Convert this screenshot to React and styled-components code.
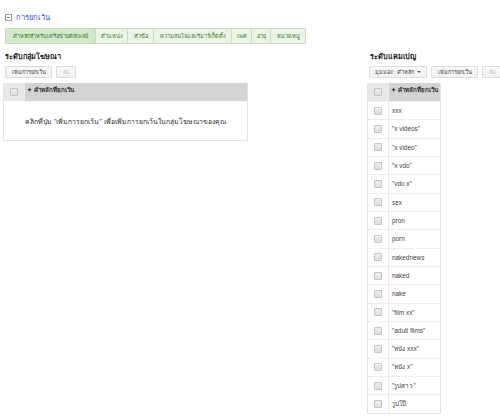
import React from "react";
import styled, { createGlobalStyle } from "styled-components";

const GlobalStyle = createGlobalStyle`
  html, body {
    margin: 0;
    padding: 0;
    background: #ffffff;
    overflow: hidden;
  }
  body {
    font-family: "Liberation Sans", "Noto Sans", Arial, sans-serif;
    color: #222;
  }
`;

const Page = styled.div`
  width: 500px;
  height: 417px;
  overflow: hidden;
  padding: 10px 0 0 5px;
  box-sizing: border-box;
`;

const TitleRow = styled.div`
  display: flex;
  align-items: center;
  gap: 4px;
  height: 14px;
`;

const CollapseIcon = styled.span`
  width: 5px;
  height: 5px;
  border: 1px solid #999;
  position: relative;
  display: inline-block;
  &::after {
    content: "";
    position: absolute;
    left: 1px;
    right: 1px;
    top: 2px;
    height: 1px;
    background: #777;
  }
`;

const TitleLink = styled.span`
  color: #1155cc;
  font-size: 7.5px;
`;

const Tabs = styled.div`
  display: flex;
  margin-top: 4px;
  height: 16px;
  width: 301px;
  border: 1px solid #c8dcc0;
  box-sizing: border-box;
  background: #e9f4e4;
`;

const Tab = styled.div`
  width: ${(p) => p.$w}px;
  display: flex;
  align-items: center;
  justify-content: center;
  font-size: 5.7px;
  color: #3f7a35;
  background: ${(p) => (p.$active ? "#d2e8c9" : "transparent")};
  border-right: 1px solid #c8dcc0;
  box-sizing: border-box;
  white-space: nowrap;
  &:last-child {
    border-right: none;
  }
`;

const Columns = styled.div`
  display: flex;
  margin-top: 8px;
  margin-left: -2px;
`;

const LeftPanel = styled.div`
  width: 245px;
  flex-shrink: 0;
`;

const RightPanel = styled.div`
  margin-left: 119px;
  flex-shrink: 0;
  width: 140px;
`;

const SectionTitle = styled.div`
  font-size: 7.3px;
  font-weight: bold;
  color: #222;
  height: 10px;
  line-height: 10px;
  padding-left: ${(p) => p.$indent || 2}px;
`;

const ButtonBar = styled.div`
  display: flex;
  gap: 4px;
  margin-top: 4px;
  padding-left: 2px;
`;

const Button = styled.div`
  height: 12px;
  width: ${(p) => p.$w}px;
  box-sizing: border-box;
  border: 1px solid #dcdcdc;
  border-radius: 1px;
  background: linear-gradient(#f8f8f8, #f1f1f1);
  color: ${(p) => (p.$disabled ? "#bbb" : "#444")};
  font-size: 5.6px;
  display: flex;
  align-items: center;
  justify-content: center;
  gap: 3px;
  white-space: nowrap;
  flex-shrink: 0;
`;

const Caret = styled.span`
  width: 0;
  height: 0;
  border-left: 2px solid transparent;
  border-right: 2px solid transparent;
  border-top: 2px solid #555;
`;

const Table = styled.div`
  margin-top: 5px;
  width: ${(p) => p.$w}px;
  border: 1px solid #e4e4e4;
  border-top: none;
  box-sizing: border-box;
`;

const HeadRow = styled.div`
  display: flex;
  height: 18px;
`;

const CheckCell = styled.div`
  width: 21px;
  flex-shrink: 0;
  display: flex;
  align-items: center;
  justify-content: center;
  background: ${(p) => (p.$head ? "#e8e8e8" : "#fff")};
  border-right: 1px solid #ececec;
  box-sizing: border-box;
`;

const Box = styled.span`
  width: 6px;
  height: 6px;
  border: 1px solid #c4c4c4;
  background: linear-gradient(#f0f0f0, #dcdcdc);
  border-radius: 1px;
`;

const HeadLabel = styled.div`
  flex: 1;
  background: #d3d3d3;
  font-size: 6.2px;
  font-weight: bold;
  color: #333;
  padding: 2px 0 0 2px;
  white-space: nowrap;
  overflow: hidden;
`;

const Empty = styled.div`
  height: 39px;
  display: flex;
  align-items: center;
  justify-content: center;
  font-size: 6.9px;
  color: #333;
  padding-top: 2px;
  box-sizing: border-box;
  white-space: nowrap;
`;

const Row = styled.div`
  display: flex;
  height: 18.33px;
  border-top: 1px solid #eeeeee;
  box-sizing: border-box;
`;

const Keyword = styled.div`
  flex: 1;
  font-size: 6.4px;
  color: #444;
  display: flex;
  align-items: center;
  padding-left: 3px;
  white-space: nowrap;
`;

const tabs = [
  { label: "คำหลักสำหรับเครือข่ายดิสเพลย์", w: 91, active: true },
  { label: "ตำแหน่ง", w: 32 },
  { label: "หัวข้อ", w: 26 },
  { label: "ความสนใจและรีมาร์เก็ตติ้ง", w: 79 },
  { label: "เพศ", w: 20 },
  { label: "อายุ", w: 19 },
  { label: "หมวดหมู่", w: 34 },
];

const keywords = [
  "xxx",
  "\"x videos\"",
  "\"x video\"",
  "\"x vdo\"",
  "\"vdo x\"",
  "sex",
  "pron",
  "porn",
  "nakednews",
  "naked",
  "nake",
  "\"film xx\"",
  "\"adult films\"",
  "\"หนัง xxx\"",
  "\"หนัง x\"",
  "\"รูปสาว\"",
  "รูปโป๊",
];

const App = () => {
  return (
    <>
      <GlobalStyle />
      <Page>
        <TitleRow>
          <CollapseIcon />
          <TitleLink>การยกเว้น</TitleLink>
        </TitleRow>

        <Tabs>
          {tabs.map((t) => (
            <Tab key={t.label} $w={t.w} $active={t.active}>
              {t.label}
            </Tab>
          ))}
        </Tabs>

        <Columns>
          <LeftPanel>
            <SectionTitle $indent={2}>ระดับกลุ่มโฆษณา</SectionTitle>
            <ButtonBar>
              <Button $w={47}>เพิ่มการยกเว้น</Button>
              <Button $w={20} $disabled>
                ลบ
              </Button>
            </ButtonBar>
            <Table $w={245}>
              <HeadRow>
                <CheckCell $head>
                  <Box />
                </CheckCell>
                <HeadLabel>✦ คำหลักที่ยกเว้น</HeadLabel>
              </HeadRow>
              <Empty>
                คลิกที่ปุ่ม "เพิ่มการยกเว้น" เพื่อเพิ่มการยกเว้นในกลุ่มโฆษณาของคุณ
              </Empty>
            </Table>
          </LeftPanel>

          <RightPanel>
            <SectionTitle $indent={3}>ระดับแคมเปญ</SectionTitle>
            <ButtonBar>
              <Button $w={58}>
                มุมมอง: คำหลัก <Caret />
              </Button>
              <Button $w={47}>เพิ่มการยกเว้น</Button>
              <Button $w={20} $disabled>
                ลบ
              </Button>
            </ButtonBar>
            <Table $w={74}>
              <HeadRow>
                <CheckCell $head>
                  <Box />
                </CheckCell>
                <HeadLabel>✦ คำหลักที่ยกเว้น</HeadLabel>
              </HeadRow>
              {keywords.map((k) => (
                <Row key={k}>
                  <CheckCell>
                    <Box />
                  </CheckCell>
                  <Keyword>{k}</Keyword>
                </Row>
              ))}
            </Table>
          </RightPanel>
        </Columns>
      </Page>
    </>
  );
};

export default App;
